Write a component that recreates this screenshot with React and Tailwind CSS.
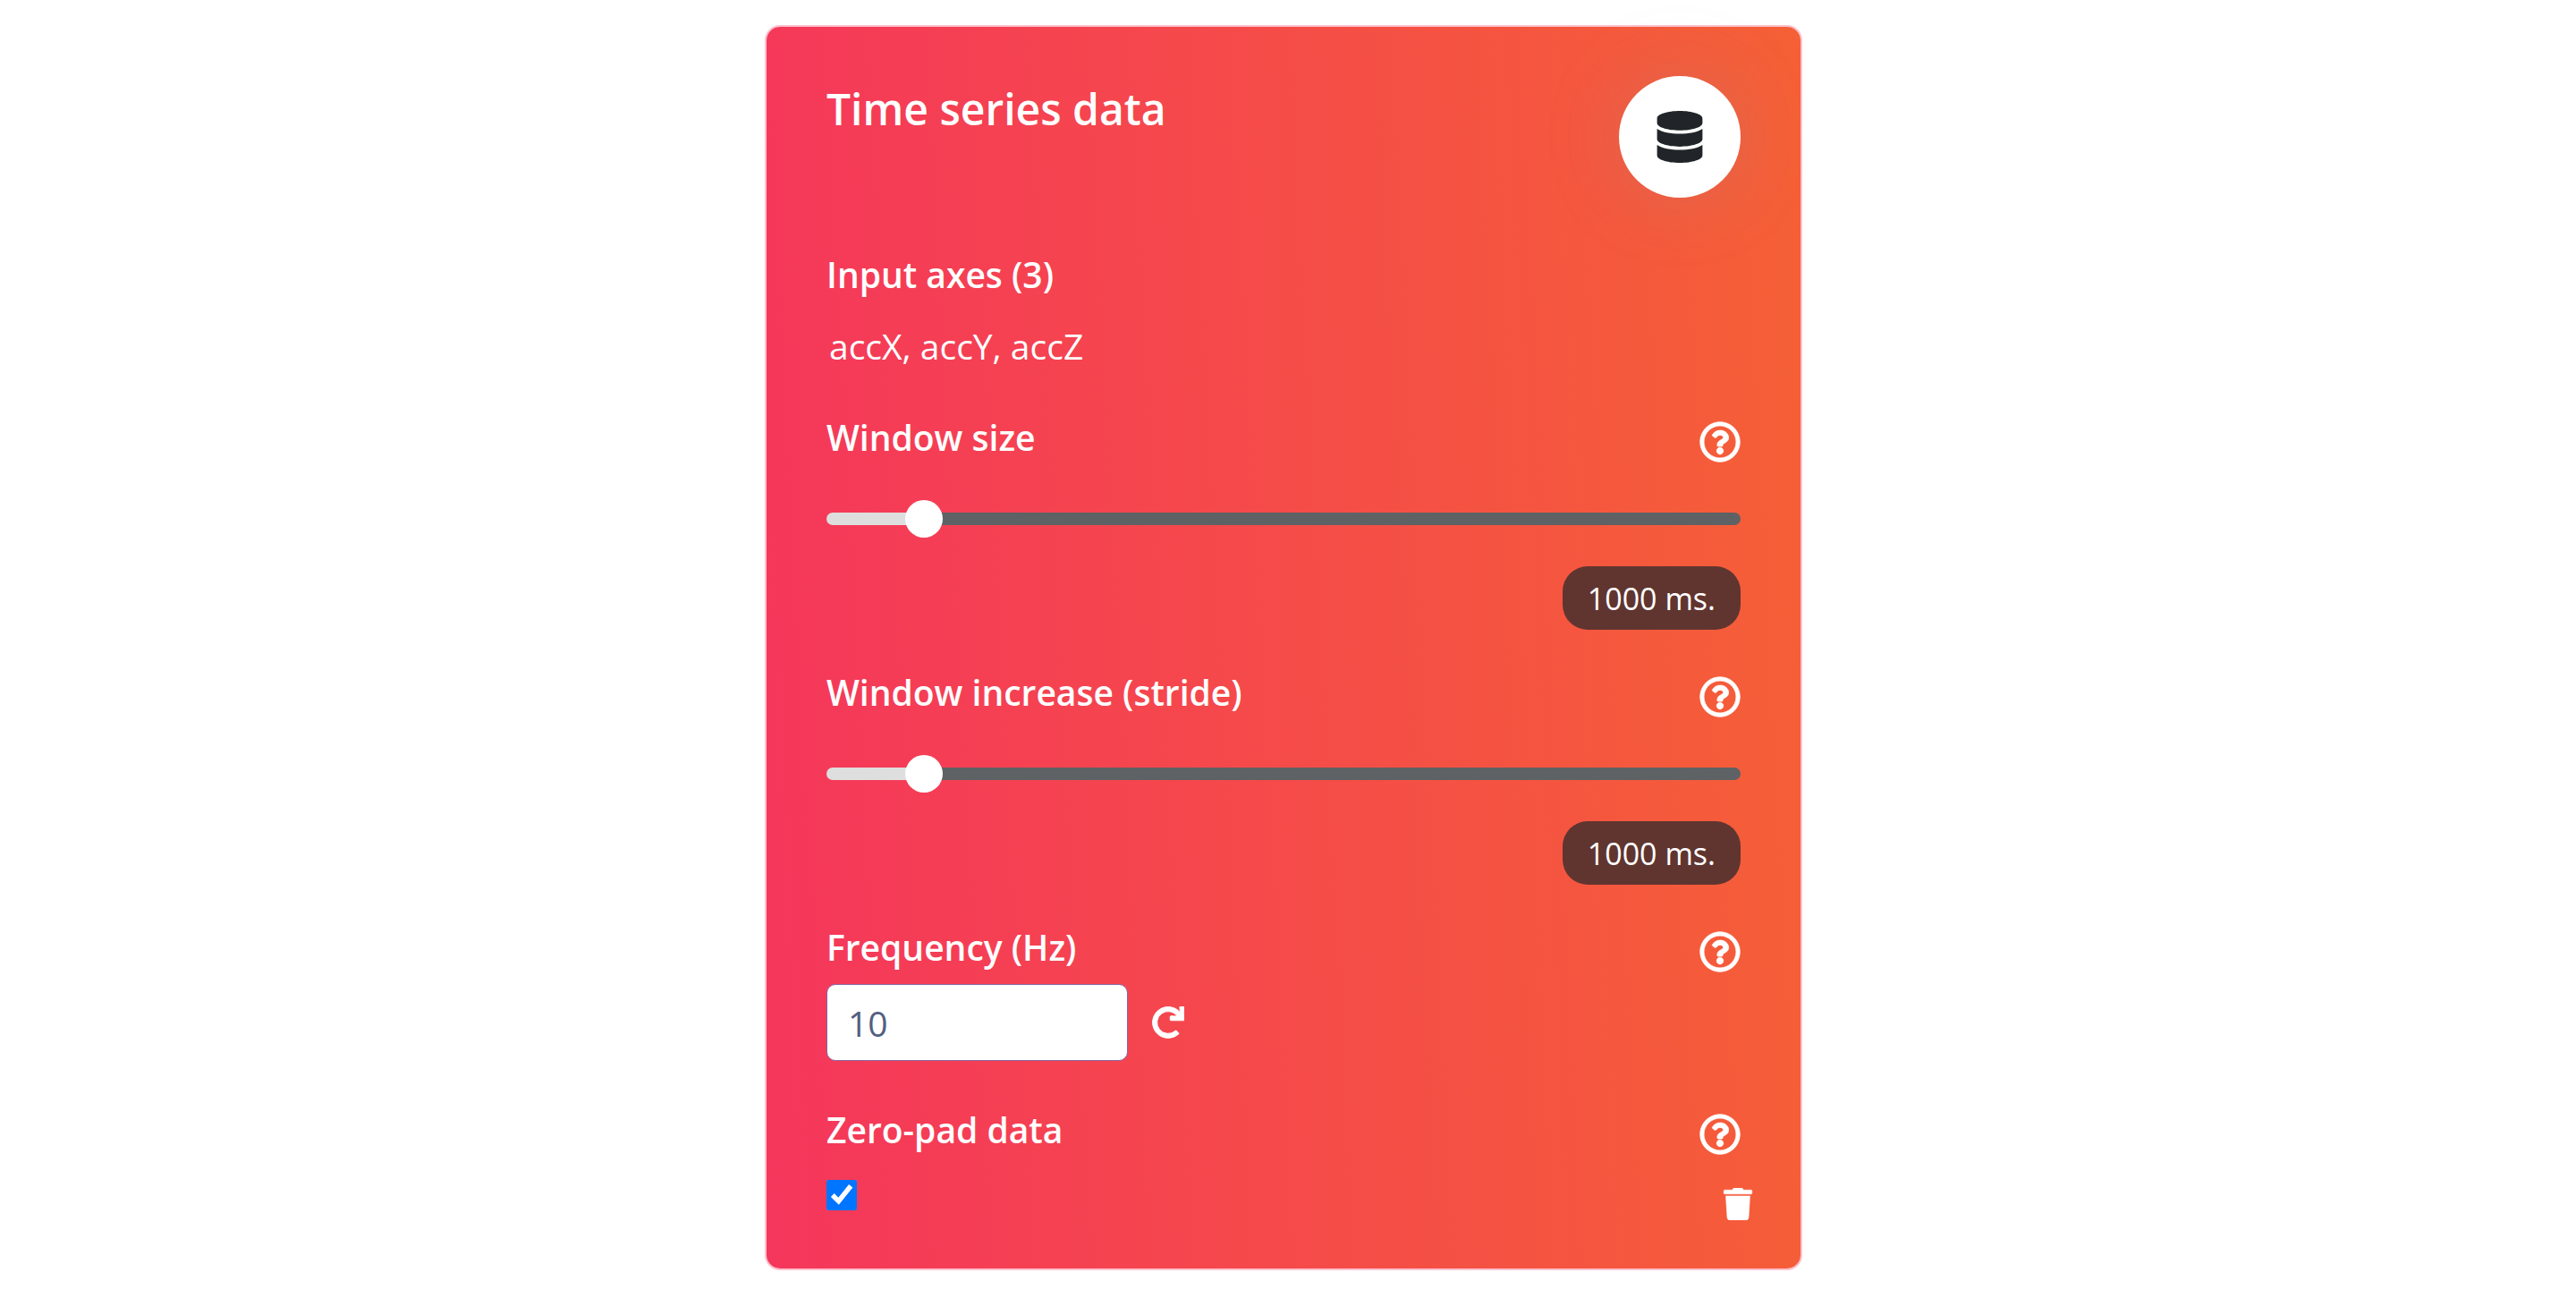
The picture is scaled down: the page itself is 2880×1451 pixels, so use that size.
import { FaDatabase, FaRegQuestionCircle, FaRedo, FaTrash } from "react-icons/fa";

function Help({ label }) {
  return (
    <button type="button" aria-label={`Help: ${label}`} className="mt-[12px] block shrink-0">
      <FaRegQuestionCircle className="size-[46px] [stroke-width:8px]" />
    </button>
  );
}

function SliderField({ id, label }) {
  return (
    <section className="mb-[40px]">
      <div className="flex h-[80px] items-start justify-between">
        <label htmlFor={id} className="text-[39px] leading-[60px] font-semibold">{label}</label>
        <Help label={label} />
      </div>
      <input
        id={id}
        type="range"
        min="0"
        max="1000"
        defaultValue="90"
        className="mt-[20px] block h-[42px] w-full appearance-none bg-transparent [&::-webkit-slider-runnable-track]:h-[14px] [&::-webkit-slider-runnable-track]:rounded-full [&::-webkit-slider-runnable-track]:bg-[linear-gradient(to_right,#dedede_10%,#5e6264_10%)] [&::-webkit-slider-thumb]:-mt-[14px] [&::-webkit-slider-thumb]:size-[42px] [&::-webkit-slider-thumb]:appearance-none [&::-webkit-slider-thumb]:rounded-full [&::-webkit-slider-thumb]:bg-white"
      />
      <div className="mt-[32px] flex justify-end">
        <output htmlFor={id} className="rounded-[28px] bg-[#603530] px-[28px] pt-px text-[34px] leading-[70px]">1000 ms.</output>
      </div>
    </section>
  );
}

export default function App() {
  return (
    <main className="flex justify-center pt-[28px] pr-[10px] pb-8 font-['Open_Sans',sans-serif] text-white">
      <article className="w-full max-w-[1160px] rounded-[17px] border-2 border-[#f5365c]/30 bg-[linear-gradient(87deg,#f5365c_0%,#f56036_100%)] bg-clip-padding px-[67px] pt-[55px] pb-[54px]">
        <header className="flex h-[188px] items-start justify-between">
          <h1 className="pt-px text-[48px] leading-[72px] font-semibold">Time series data</h1>
          <span className="flex size-[136px] items-center justify-center rounded-full bg-white text-[#212529] shadow-[0_0_90px_0_rgba(136,152,170,0.2)]">
            <FaDatabase className="size-[58px]" />
          </span>
        </header>
        <section>
          <h2 className="pt-[4px] text-[39px] leading-[60px] font-semibold">Input axes (3)</h2>
          <p className="mt-[20px] mb-[42px] pl-[3px] text-[39px] leading-[60px]">accX, accY, accZ</p>
        </section>
        <SliderField id="window-size" label="Window size" />
        <SliderField id="window-increase" label="Window increase (stride)" />
        <section>
          <div className="flex h-[71px] items-start justify-between">
            <label htmlFor="frequency" className="text-[39px] leading-[60px] font-semibold">Frequency (Hz)</label>
            <Help label="Frequency" />
          </div>
          <div className="flex items-center gap-[27px]">
            <input id="frequency" type="text" inputMode="numeric" defaultValue="10" className="h-[86px] w-[337px] rounded-[10px] border border-[#8965a0] bg-white px-[23px] text-[39px] text-[#525f7f]" />
            <button type="button" aria-label="Reset frequency"><FaRedo className="size-[36px] [stroke-width:14px]" /></button>
          </div>
        </section>
        <section className="mt-[47px]">
          <div className="flex h-[86px] items-start justify-between">
            <label htmlFor="zero-pad" className="text-[39px] leading-[60px] font-semibold">Zero-pad data</label>
            <Help label="Zero-pad data" />
          </div>
          <div className="-mr-[15px] flex items-start justify-between">
            <input id="zero-pad" type="checkbox" defaultChecked className="size-[34px]" />
            <button type="button" aria-label="Delete block" className="mt-[9px]"><FaTrash className="size-[36px] [stroke-width:8px]" /></button>
          </div>
        </section>
      </article>
    </main>
  );
}
